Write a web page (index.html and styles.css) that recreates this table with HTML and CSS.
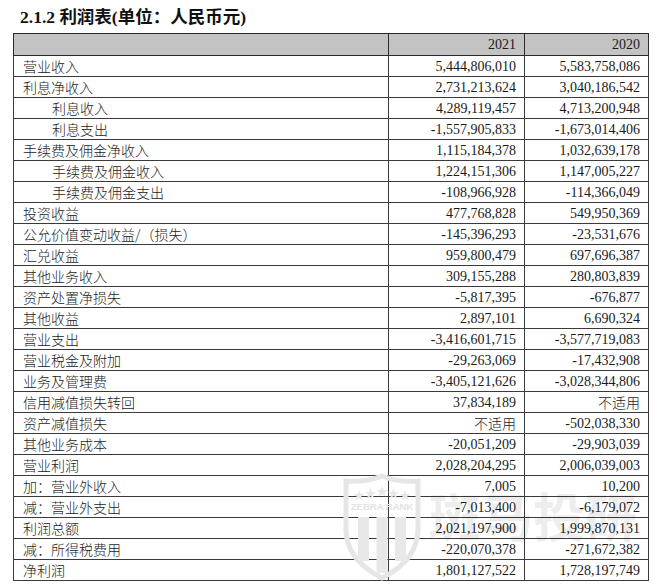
FILE: index.html
```html
<!DOCTYPE html>
<html lang="zh">
<head>
<meta charset="utf-8">
<link rel="stylesheet" href="styles.css">
</head>
<body>
<div class="page">
  <h1 class="title">2.1.2 利润表(单位：人民币元)</h1>
  <div class="wrap">
    <table class="sheet">
      <colgroup><col class="c1"><col class="c2"><col class="c3"></colgroup>
      <thead>
        <tr><th></th><th>2021</th><th>2020</th></tr>
      </thead>
      <tbody>
        <tr><td>营业收入</td><td>5,444,806,010</td><td>5,583,758,086</td></tr>
        <tr><td>利息净收入</td><td>2,731,213,624</td><td>3,040,186,542</td></tr>
        <tr><td class="ind">利息收入</td><td>4,289,119,457</td><td>4,713,200,948</td></tr>
        <tr><td class="ind">利息支出</td><td>-1,557,905,833</td><td>-1,673,014,406</td></tr>
        <tr><td>手续费及佣金净收入</td><td>1,115,184,378</td><td>1,032,639,178</td></tr>
        <tr><td class="ind">手续费及佣金收入</td><td>1,224,151,306</td><td>1,147,005,227</td></tr>
        <tr><td class="ind">手续费及佣金支出</td><td>-108,966,928</td><td>-114,366,049</td></tr>
        <tr><td>投资收益</td><td>477,768,828</td><td>549,950,369</td></tr>
        <tr><td>公允价值变动收益/（损失）</td><td>-145,396,293</td><td>-23,531,676</td></tr>
        <tr><td>汇兑收益</td><td>959,800,479</td><td>697,696,387</td></tr>
        <tr><td>其他业务收入</td><td>309,155,288</td><td>280,803,839</td></tr>
        <tr><td>资产处置净损失</td><td>-5,817,395</td><td>-676,877</td></tr>
        <tr><td>其他收益</td><td>2,897,101</td><td>6,690,324</td></tr>
        <tr><td>营业支出</td><td>-3,416,601,715</td><td>-3,577,719,083</td></tr>
        <tr><td>营业税金及附加</td><td>-29,263,069</td><td>-17,432,908</td></tr>
        <tr><td>业务及管理费</td><td>-3,405,121,626</td><td>-3,028,344,806</td></tr>
        <tr><td>信用减值损失转回</td><td>37,834,189</td><td class="cn">不适用</td></tr>
        <tr><td>资产减值损失</td><td class="cn">不适用</td><td>-502,038,330</td></tr>
        <tr><td>其他业务成本</td><td>-20,051,209</td><td>-29,903,039</td></tr>
        <tr><td>营业利润</td><td>2,028,204,295</td><td>2,006,039,003</td></tr>
        <tr><td>加：营业外收入</td><td>7,005</td><td>10,200</td></tr>
        <tr><td>减：营业外支出</td><td>-7,013,400</td><td>-6,179,072</td></tr>
        <tr><td>利润总额</td><td>2,021,197,900</td><td>1,999,870,131</td></tr>
        <tr><td>减：所得税费用</td><td>-220,070,378</td><td>-271,672,382</td></tr>
        <tr><td>净利润</td><td>1,801,127,522</td><td>1,728,197,749</td></tr>
      </tbody>
    </table>
    <svg class="shield" viewBox="0 0 80 108" width="80" height="108" aria-hidden="true">
      <path d="M40 3 C27 8 15 9 4 8 L4 56 C4 80 20 95 40 105 C60 95 76 80 76 56 L76 8 C65 9 53 8 40 3 Z" fill="none" stroke="#e6e6e6" stroke-width="5"/>
      <g fill="#e8e8e8">
        <polygon points="17,17 18.5,21 22.5,21 19.3,23.5 20.5,27.5 17,25 13.5,27.5 14.7,23.5 11.5,21 15.5,21"/>
        <polygon points="28.5,15 30,19 34,19 30.8,21.5 32,25.5 28.5,23 25,25.5 26.2,21.5 23,19 27,19"/>
        <polygon points="40,13 41.5,17 45.5,17 42.3,19.5 43.5,23.5 40,21 36.5,23.5 37.7,19.5 34.5,17 38.5,17"/>
        <polygon points="51.5,15 53,19 57,19 53.8,21.5 55,25.5 51.5,23 48,25.5 49.2,21.5 46,19 50,19"/>
        <polygon points="63,17 64.5,21 68.5,21 65.3,23.5 66.5,27.5 63,25 59.5,27.5 60.7,23.5 57.5,21 61.5,21"/>
        <rect x="16" y="44" width="11" height="44"/>
        <rect x="34.5" y="44" width="11" height="56"/>
        <rect x="53" y="44" width="11" height="44"/>
      </g>
      <text x="40" y="37" class="shield-text">ZEBRA RANK</text>
    </svg>
    <span class="mark-text" aria-hidden="true">斑马投研</span>
  </div>
</div>
</body>
</html>
```

FILE: styles.css
```css
html, body {
  margin: 0;
  padding: 0;
  background: #ffffff;
}

.page {
  padding: 6px 0 0 13px;
  font-family: "Liberation Serif", "Noto Sans CJK SC", serif;
  color: #1a1a1a;
}

.title {
  margin: 0 0 4px 7px;
  font-size: 17.5px;
  line-height: 23px;
  font-weight: bold;
  font-family: "Liberation Serif", "Noto Sans CJK SC", serif;
  color: #111;
}

.wrap {
  position: relative;
  width: 635px;
}

.sheet {
  border-collapse: collapse;
  width: 635px;
  table-layout: fixed;
  font-size: 14px;
}

.c1 { width: 375px; }
.c2 { width: 136px; }
.c3 { width: 124px; }

.sheet th,
.sheet td {
  border: 1px solid #3a3a3a;
  padding: 0 8px 0 9px;
  height: 20px;
  line-height: 19px;
  white-space: nowrap;
}

.sheet thead th {
  background: #c3c3c3;
  font-weight: normal;
  text-align: right;
  height: 21px;
  border-color: #2a2a2a;
}

.sheet td:first-child {
  text-align: left;
  font-family: "Noto Sans CJK SC", sans-serif;
  font-weight: 300;
}

.sheet td + td {
  text-align: right;
}

.sheet td.ind {
  padding-left: 38px;
}

.sheet td.cn {
  font-family: "Noto Sans CJK SC", sans-serif;
  font-weight: 300;
}

.shield {
  position: absolute;
  left: 329px;
  top: 440px;
  display: block;
  pointer-events: none;
}

.shield-text {
  font-family: "Liberation Sans", sans-serif;
  font-weight: bold;
  font-size: 9.5px;
  fill: #e2e2e2;
  text-anchor: middle;
}

.mark-text {
  position: absolute;
  left: 416px;
  top: 456px;
  font-family: "Noto Sans CJK SC", sans-serif;
  font-weight: bold;
  font-size: 52px;
  line-height: 1;
  color: rgba(0, 0, 0, 0.07);
  pointer-events: none;
  white-space: nowrap;
}
```
